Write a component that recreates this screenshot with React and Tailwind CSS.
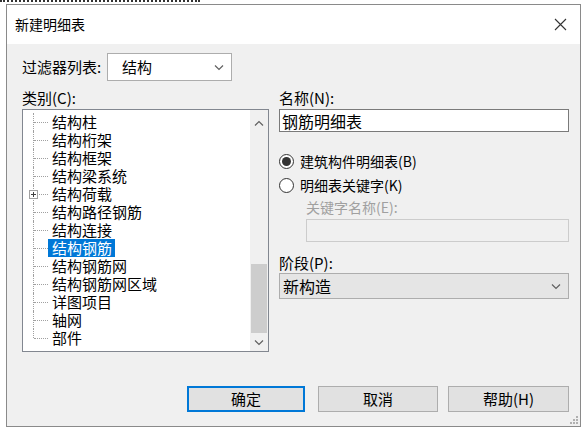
import React from "react";

const FONT = { fontFamily: '"Noto Sans CJK SC", "Noto Sans", sans-serif' };

function Chevron({ dir = "down", className = "" }) {
  const d = dir === "down" ? "M1 1.5 L5 5.5 L9 1.5" : "M1 5.5 L5 1.5 L9 5.5";
  return (
    <svg width="10" height="7" viewBox="0 0 10 7" className={className}>
      <path d={d} fill="none" stroke="#606060" strokeWidth="1.2" />
    </svg>
  );
}

const items = [
  "结构柱",
  "结构桁架",
  "结构框架",
  "结构梁系统",
  "结构荷载",
  "结构路径钢筋",
  "结构连接",
  "结构钢筋",
  "结构钢筋网",
  "结构钢筋网区域",
  "详图项目",
  "轴网",
  "部件",
];

function TreeRow({ label, selected, plus, last }) {
  return (
    <div className="relative h-[18px] flex items-center">
      <div
        className={`absolute left-[9px] top-0 border-l border-dotted border-[#a0a0a0] ${
          last ? "h-[9px]" : "h-[18px]"
        }`}
      />
      <div className="absolute left-[10px] top-[9px] w-[14px] border-t border-dotted border-[#a0a0a0]" />
      {plus && (
        <div className="absolute left-[5px] top-[5px] w-[9px] h-[9px] bg-white border border-[#a0a0a0] flex items-center justify-center">
          <div className="absolute w-[5px] h-px bg-[#404040]" />
          <div className="absolute w-px h-[5px] bg-[#404040]" />
        </div>
      )}
      <div
        className={`ml-[24px] pl-[4px] pr-[3px] h-[18px] leading-[18px] text-[15px] whitespace-nowrap ${
          selected ? "bg-[#0078d7] text-white" : "text-black"
        }`}
      >
        {label}
      </div>
    </div>
  );
}

function Radio({ checked, label }) {
  return (
    <div className="flex items-center h-[20px]">
      <div className="w-[15px] h-[15px] rounded-full border border-[#333] bg-white flex items-center justify-center">
        {checked && <div className="w-[9px] h-[9px] rounded-full bg-[#333]" />}
      </div>
      <span className="ml-[6px] text-[14px] leading-[20px] text-black whitespace-nowrap">{label}</span>
    </div>
  );
}

export default function App() {
  return (
    <div className="w-[588px] h-[433px] bg-white relative overflow-hidden" style={FONT}>
      <div className="absolute left-0 top-0 w-[200px] border-t-2 border-dotted border-[#333]" />
      <div className="ml-[6px] mt-[4px] w-[575px] h-[423px] border border-[#8a8a8a] flex flex-col">
        <div className="h-[39px] bg-white flex items-center pl-[8px] pr-[13px] shrink-0">
          <span className="text-[14px] text-black">新建明细表</span>
          <svg width="13" height="13" viewBox="0 0 13 13" className="ml-auto">
            <path d="M1 1 L12 12 M12 1 L1 12" stroke="#333" strokeWidth="1.1" fill="none" />
          </svg>
        </div>
        <div className="flex-1 bg-[#f0f0f0] pl-[15px] pr-[11px] flex flex-col relative">
          <div className="mt-[9px] flex items-center h-[28px]">
            <span className="w-[85px] text-[15px] text-black whitespace-nowrap">过滤器列表:</span>
            <div className="w-[125px] h-[28px] bg-white border border-[#adadad] flex items-center pl-[14px] pr-[7px]">
              <span className="text-[15px] text-black">结构</span>
              <Chevron className="ml-auto" />
            </div>
          </div>
          <div className="mt-[7px] flex">
            <div className="w-[247px] flex flex-col">
              <div className="h-[20px] leading-[20px] text-[15px] text-black">类别(C):</div>
              <div className="mt-[1px] h-[243px] bg-white border border-[#828790] flex">
                <div className="flex-1 pt-[3px] pl-[1px] overflow-hidden">
                  {items.slice(0, 12).map((it, i) => (
                    <TreeRow key={it} label={it} selected={i === 7} plus={i === 4} />
                  ))}
                  <TreeRow label={items[12]} last />
                </div>
                <div className="w-[18px] bg-[#f0f0f0] flex flex-col">
                  <div className="h-[24px] flex items-center justify-center pt-[2px]">
                    <Chevron dir="up" />
                  </div>
                  <div className="flex-1 flex flex-col justify-end px-[1px]">
                    <div className="h-[69px] bg-[#cdcdcd]" />
                  </div>
                  <div className="h-[18px] flex items-center justify-center">
                    <Chevron dir="down" />
                  </div>
                </div>
              </div>
            </div>
            <div className="ml-[10px] w-[290px] flex flex-col">
              <div className="h-[20px] leading-[20px] text-[15px] text-black">名称(N):</div>
              <div className="mt-[1px] h-[23px] bg-white border border-[#7a7a7a] flex items-center pl-[2px]">
                <span className="text-[16px] leading-[20px] text-black">钢筋明细表</span>
              </div>
              <div className="mt-[19px]">
                <Radio checked label="建筑构件明细表(B)" />
              </div>
              <div className="mt-[4px]">
                <Radio label="明细表关键字(K)" />
              </div>
              <div className="ml-[27px] mt-[2px] h-[20px] leading-[20px] text-[14px] text-[#a0a0a0]">
                关键字名称(E):
              </div>
              <div className="ml-[27px] mt-[2px] h-[23px] bg-[#f0f0f0] border border-[#cccccc]" />
              <div className="mt-[12px] h-[18px] leading-[18px] text-[15px] text-black">阶段(P):</div>
              <div className="mt-[1px] h-[26px] bg-[#e5e5e5] border border-[#adadad] flex items-center pl-[3px] pr-[7px]">
                <span className="text-[16px] text-black">新构造</span>
                <Chevron className="ml-auto" />
              </div>
            </div>
          </div>
          <div className="mt-auto mb-[14px] flex justify-end">
            <div className="w-[118px] h-[26px] bg-[#e1e1e1] border-2 border-[#0078d7] flex items-center justify-center text-[15px] text-black">
              确定
            </div>
            <div className="ml-[13px] w-[120px] h-[26px] bg-[#e1e1e1] border border-[#adadad] flex items-center justify-center text-[15px] text-black">
              取消
            </div>
            <div className="ml-[10px] w-[121px] h-[26px] bg-[#e1e1e1] border border-[#adadad] flex items-center justify-center text-[15px] text-black">
              帮助(H)
            </div>
          </div>
          <svg width="8" height="8" viewBox="0 0 8 8" className="absolute right-[2px] bottom-[2px]">
            <rect x="6" y="0" width="2" height="2" fill="#b0b0b0" />
            <rect x="3" y="3" width="2" height="2" fill="#b0b0b0" />
            <rect x="6" y="3" width="2" height="2" fill="#b0b0b0" />
            <rect x="0" y="6" width="2" height="2" fill="#b0b0b0" />
            <rect x="3" y="6" width="2" height="2" fill="#b0b0b0" />
            <rect x="6" y="6" width="2" height="2" fill="#b0b0b0" />
          </svg>
        </div>
      </div>
    </div>
  );
}
